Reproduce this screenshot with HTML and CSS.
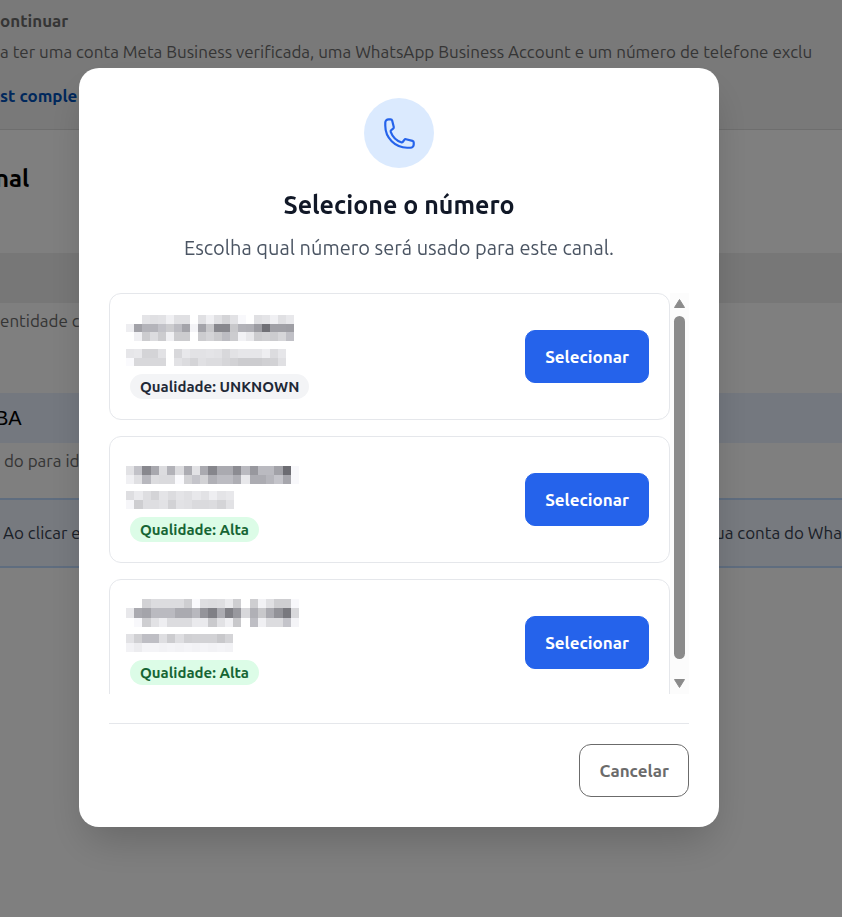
FILE: index.html
```html
<!DOCTYPE html>
<html lang="pt-BR">
<head>
<meta charset="utf-8">
<meta name="viewport" content="width=device-width, initial-scale=1">
<title>Selecione o número</title>
<link rel="stylesheet" href="styles.css">
</head>
<body>
<main class="page">
  <section class="notice">
    <strong class="notice-title">ontinuar</strong>
    <p class="notice-text">a ter uma conta Meta Business verificada, uma WhatsApp Business Account e um número de telefone exclu</p>
    <a class="notice-link" href="#">st comple</a>
  </section>
  <section class="form">
    <h1 class="form-title">nal</h1>
    <input class="field" type="text" aria-label="Nome" disabled>
    <p class="hint">entidade c</p>
    <input class="field field-filled" type="text" aria-label="Conta" value="BA">
    <p class="hint">&nbsp;do para id</p>
    <div class="alert"><span>Ao clicar e</span><span>ua conta do Wha</span></div>
  </section>
</main>

<div class="overlay">
  <div class="modal" role="dialog" aria-modal="true" aria-labelledby="dialog-title">
    <div class="badge-icon">
      <svg viewBox="0 0 24 24" width="35" height="35" fill="none" stroke="currentColor" stroke-width="1.5" stroke-linecap="round" stroke-linejoin="round" aria-hidden="true"><path d="M2.25 6.75c0 8.284 6.716 15 15 15h2.25a2.25 2.25 0 0 0 2.25-2.25v-1.372c0-.516-.351-.966-.852-1.091l-4.423-1.106c-.44-.11-.902.055-1.173.417l-.97 1.293c-.282.376-.769.542-1.21.38a12.035 12.035 0 0 1-7.143-7.143c-.162-.441.004-.928.38-1.21l1.293-.97c.363-.271.527-.734.417-1.173L6.963 3.102a1.125 1.125 0 0 0-1.091-.852H4.5A2.25 2.25 0 0 0 2.25 4.5v2.25Z"/></svg>
    </div>
    <h2 class="title" id="dialog-title">Selecione o número</h2>
    <p class="subtitle">Escolha qual número será usado para este canal.</p>

    <div class="list">
      <ul class="cards">
        <li class="card">
          <div class="info">
            <div class="name"><svg class="mosaic" width="168" height="26"></svg></div>
            <div class="phone"><svg class="mosaic" width="160" height="17"></svg></div>
            <span class="quality">Qualidade: UNKNOWN</span>
          </div>
          <button class="select" type="button">Selecionar</button>
        </li>
        <li class="card">
          <div class="info">
            <div class="name"><svg class="mosaic" width="173" height="18"></svg></div>
            <div class="phone"><svg class="mosaic" width="108" height="18"></svg></div>
            <span class="quality high">Qualidade: Alta</span>
          </div>
          <button class="select" type="button">Selecionar</button>
        </li>
        <li class="card">
          <div class="info">
            <div class="name"><svg class="mosaic" width="173" height="28"></svg></div>
            <div class="phone"><svg class="mosaic" width="107" height="18"></svg></div>
            <span class="quality high">Qualidade: Alta</span>
          </div>
          <button class="select" type="button">Selecionar</button>
        </li>
      </ul>
      <div class="scrollbar" aria-hidden="true">
        <svg width="13" height="11" viewBox="0 0 13 11"><path d="M6.500 1.500 11.500 9.500H1.500Z"/></svg>
        <div class="thumb"></div>
        <svg width="13" height="11" viewBox="0 0 13 11"><path d="M6.500 9.500 11.500 1.500H1.500Z"/></svg>
      </div>
    </div>

    <footer class="actions"><button class="cancel" type="button">Cancelar</button></footer>
  </div>
</div>
<script src="mosaic.js"></script>
</body>
</html>
```
FILE: mosaic.js
```js
// Hidden names and numbers: each row lists one grey level (00-ff) per cell.
const mosaics = [
  ["ff ff e4 e0 e2 f0 e0 e0 ff e0 f0 e0 d4 e2 f8 ff e0 e4 f0 e0 e8",
   "ee a2 b4 b4 c2 cc bc a4 f4 a4 c8 88 88 c8 b2 b0 9c 70 a0 a0 9e",
   "ff f0 cc dc cc f0 cc cc ff cc d4 ca bc cc f2 e8 cc d0 cc d6 c0"],
  ["e6 e8 d4 d4 e2 ff d8 e8 e2 e2 e4 e2 d8 e2 e6 e6 e6 ee dc e6",
   "fa d8 d8 d8 d8 ff e2 dc d4 e0 dc dc d6 d2 cc cc cc d0 d2 e0"],
  ["e2 c2 88 a8 dc b2 dc ac e2 aa 86 aa aa 8c ba 98 ba ba a2 6c f8",
   "f0 e0 b8 dc da da fa d2 c4 d2 b0 bc bc ae e8 ac ac b6 c4 a6 f8"],
  ["de ea de d4 e4 dc e4 e0 e8 e2 ee e4 e8",
   "f6 ce de de e2 d2 e2 e0 da da dc d4 e2"],
  ["ff ff d2 dc dc dc dc ce fa de dc de ea ce ff ce f2 e0 ce ce f8",
   "e8 aa a4 ba ba ba aa aa b8 94 80 ac 80 98 d8 b0 c8 aa 92 78 d8",
   "ff f8 ce e2 ee dc dc dc ea ea ca e2 f0 c8 ff be f0 dc dc c4 f4"],
  ["e2 d0 be be de cc de d0 d2 d2 d2 c8 d4",
   "f2 ec f4 f4 f2 f4 f2 f4 f2 f4 f2 f4 f2"]
];

document.querySelectorAll(".mosaic").forEach((svg, index) => {
  const rows = mosaics[index].map(row => row.split(" "));
  svg.setAttribute("viewBox", `0 0 ${rows[0].length} ${rows.length}`);
  svg.setAttribute("preserveAspectRatio", "none");
  svg.setAttribute("shape-rendering", "crispEdges");
  rows.forEach((row, y) => row.forEach((level, x) => {
    const rect = document.createElementNS("http://www.w3.org/2000/svg", "rect");
    const value = parseInt(level, 16);
    const blue = Math.min(255, value + (value < 200 ? 6 : 3)).toString(16);
    rect.setAttribute("x", x);
    rect.setAttribute("y", y);
    rect.setAttribute("width", 1);
    rect.setAttribute("height", 1);
    rect.setAttribute("fill", `#${level}${level}${blue}`);
    svg.append(rect);
  }));
});
```
FILE: styles.css
```css
* { box-sizing: border-box; }

body {
  margin: 0;
  font-family: Ubuntu, "Noto Sans", sans-serif;
  font-size: 17px;
  line-height: 26px;
  color: #111827;
  background: #fff;
}

h1, h2, p, ul { margin: 0; padding: 0; }
button, input { font: inherit; }

.page {
  height: 100vh;
  overflow: hidden;
  white-space: nowrap;
}

.notice {
  display: flex;
  flex-direction: column;
  align-items: flex-start;
  padding: 8px 0 20px;
  background: #f3f3f3;
  border-bottom: 1px solid #dcdcdc;
}
.notice-title { color: #6b6b6b; }
.notice-text { margin: 5px 0 18px; color: #6b6b6b; }
.notice-link { color: #0050b8; font-weight: 600; text-decoration: none; }

.form-title {
  margin: 33px 0 58px;
  font-size: 24px;
  line-height: 32px;
  color: #000;
}
.form-title, .field { text-indent: -5px; }
.field {
  display: block;
  width: 100%;
  height: 50px;
  padding: 0;
  border: 0;
  background: #eee;
  color: #000;
}
.field-filled {
  background: #e8f0fe;
  font-family: "Liberation Sans", sans-serif;
  font-size: 20px;
}
.hint { margin: 5px 0 59px; color: #6b6b6b; }
.alert {
  display: flex;
  justify-content: space-between;
  margin-top: -35px;
  padding: 20px 0 20px 3px;
  border: solid #bfdbfe;
  border-width: 2px 0;
  background: #eff4fe;
  color: #374151;
}

.overlay {
  position: fixed;
  inset: 0;
  display: flex;
  align-items: flex-start;
  padding: 68px 123px 68px 79px;
  background: rgba(0, 0, 0, .5);
  overflow: auto;
}
.modal {
  flex: 1;
  min-width: 0;
  padding: 30px;
  border-radius: 20px;
  background: #fff;
  box-shadow: 0 20px 40px -8px rgba(0, 0, 0, .2);
  text-align: center;
}
.badge-icon {
  display: grid;
  place-items: center;
  width: 70px;
  height: 70px;
  margin: 0 auto 20px;
  border-radius: 50%;
  background: #dbeafe;
  color: #2563eb;
}
.title { font-size: 25px; line-height: 34px; }
.subtitle {
  margin: 10px 0 30px;
  font-size: 20px;
  line-height: 31px;
  color: #4b5563;
}

.list {
  display: flex;
  height: 401px;
  overflow: hidden;
}
.cards {
  display: flex;
  flex: 1;
  flex-direction: column;
  gap: 16px;
  overflow: hidden;
  list-style: none;
}
.card {
  display: flex;
  flex: none;
  align-items: center;
  justify-content: space-between;
  padding: 20px 20px 20px 16px;
  border: 1px solid #e5e7eb;
  border-radius: 12px;
  text-align: left;
}
.info { display: grid; justify-items: start; }
.name { display: flex; align-items: flex-end; height: 27px; }
.phone { display: flex; align-items: flex-end; height: 18px; margin: 7px 0 8px; }
.mosaic { display: block; }
.quality {
  margin-left: 4px;
  padding: 0 10px;
  border-radius: 13px;
  background: #f3f4f6;
  color: #1f2937;
  font-size: 15px;
  font-weight: 600;
  line-height: 25px;
}
.high { background: #dcfce7; color: #166534; }

.select, .cancel {
  padding: 13px 19px;
  border: 1px solid #2563eb;
  border-radius: 10px;
  background: #2563eb;
  color: #fff;
  line-height: 25px;
  font-weight: 600;
}

.scrollbar {
  display: flex;
  flex-direction: column;
  align-items: center;
  gap: 7px;
  width: 19px;
  padding: 5px 0;
  background: #fcfcfc;
}
.scrollbar svg {
  fill: #8b8b8b;
  stroke: #8b8b8b;
  stroke-linejoin: round;
}
.scrollbar svg:last-child { margin-top: 12px; }
.thumb {
  flex: 1;
  width: 11px;
  border-radius: 6px;
  background: #8b8b8b;
}

.actions {
  display: flex;
  justify-content: flex-end;
  margin-top: 29px;
  padding-top: 20px;
  border-top: 1px solid #e5e7eb;
}
.cancel {
  border-color: #6b6b6b;
  border-radius: 12px;
  background: #fff;
  color: #6b6b6b;
  font-weight: 700;
}
```
